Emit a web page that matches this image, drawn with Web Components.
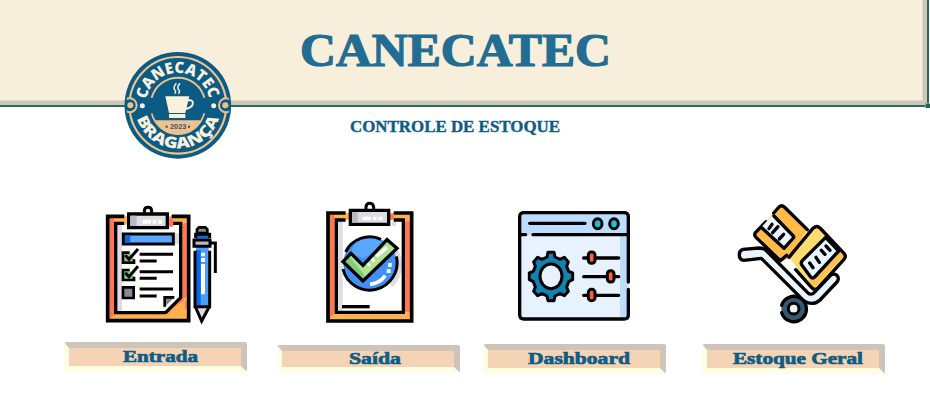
<!DOCTYPE html>
<html lang="pt-BR">
<head>
<meta charset="utf-8">
<title>Canecatec</title>
<style>body{margin:0;background:#fff;font-family:"Liberation Serif",serif;overflow:hidden}</style>
</head>
<body>
<stock-app></stock-app>
<script>
const define = (name, html) => customElements.define(name, class extends HTMLElement {
  constructor() {
    super();
    this.attachShadow({mode: 'open'}).innerHTML = html;
  }
});

// Text fitted to a given width, sitting on a given baseline
customElements.define('fit-text', class extends HTMLElement {
  connectedCallback() {
    const a = n => this.getAttribute(n);
    const w = +a('w'), h = +a('h');
    this.attachShadow({mode: 'open'}).innerHTML = `
      <style>:host{display:block;width:${w}px;height:${h}px}svg{display:block;overflow:visible}
      text{font:bold ${a('size')}px "Liberation Serif",serif;fill:currentColor;stroke:currentColor;stroke-width:${a('weight')}px}</style>
      <svg width="${w}" height="${h}"><text x="0" y="${a('base')}" textLength="${w}" lengthAdjust="spacingAndGlyphs">${a('label')}</text></svg>`;
  }
});

define('brand-logo', `
<style>:host{display:block;width:125px;height:120px}svg{display:block}
.t{font-family:"Open Sans","Liberation Sans",sans-serif;font-weight:800;fill:#f8f1de}</style>
<svg width="125" height="120" viewBox="0 0 375 360">
<defs><path id="up" d="M94.500 199A96 96 0 1 1 282.500 199"/><path id="dn" d="M59.500 181A129 129 0 0 0 317.500 181"/>
<clipPath id="disc"><circle cx="188.500" cy="181" r="156"/></clipPath></defs>
<circle cx="188.500" cy="181" r="160" fill="#0b5b85"/>
<circle cx="188.500" cy="181" r="145" fill="none" stroke="#eec28e" stroke-width="6.500"/>
<g clip-path="url(#disc)"><g fill="#0b5b85" stroke="#eec28e" stroke-width="6"><circle cx="44" cy="181" r="21"/><circle cx="333" cy="181" r="21"/></g>
<path d="M28 130H36V232H28ZM341 130H349V232H341Z" fill="#0b5b85"/></g>
<g fill="#eec28e"><circle cx="46" cy="181" r="9"/><circle cx="331" cy="181" r="9"/></g>
<g fill="#f8f1de"><circle cx="82" cy="182" r="7.500"/><circle cx="296" cy="182" r="7.500"/></g>
<path d="M110 158A82 82 0 0 1 268 158" fill="none" stroke="#eec28e" stroke-width="6"/>
<path d="M110 205Q113 218 120 228H258Q264 218 268 205" fill="none" stroke="#eec28e" stroke-width="5"/>
<path d="M117 228H261A83 83 0 0 1 117 228" fill="#eec28e"/>
<path d="M151 154H223L211 204H162ZM162 207H211V219H162Z" fill="#f8f1de"/>
<path d="M218 166H226Q236 168 233 178Q229 189 212 191" fill="none" stroke="#f8f1de" stroke-width="6"/>
<path d="M179 146Q185 138 178 133Q175 126 184 115M190 146Q197 138 190 133Q185 127 195 115" fill="none" stroke="#f8f1de" stroke-width="4.500"/>
<text x="165" y="253" textLength="49" lengthAdjust="spacingAndGlyphs" font-family="Liberation Sans,sans-serif" font-weight="bold" font-size="24" fill="#35586a">2023</text>
<circle cx="155" cy="245" r="3.500" fill="#35586a"/><circle cx="222" cy="245" r="3.500" fill="#35586a"/>
<text class="t" font-size="47"><textPath href="#up" startOffset="36" textLength="266" lengthAdjust="spacingAndGlyphs">CANECATEC</textPath></text>
<text class="t" font-size="46"><textPath href="#dn" startOffset="40" textLength="325" lengthAdjust="spacingAndGlyphs">BRAGANÇA</textPath></text>
</svg>`);

define('page-header', `
<style>:host{display:block;position:relative;box-sizing:border-box;width:929px;height:107px;background:#f7efdc;
border-right:2px solid #2c6a58;border-bottom:2px solid #2c6a58;box-shadow:inset -4px -4px #cbc7b9,inset -5px -5px #e1dac6}
.title{padding:26px 0 0 300px;color:#236d92}
brand-logo{position:absolute;left:115px;top:45px}
i{position:absolute;right:-3px;bottom:-3px;width:5px;height:5px;background:#216448;border-left:1px solid #88a897;border-top:1px solid #88a897;box-sizing:border-box}</style>
<div class="title"><slot></slot></div><i></i><brand-logo></brand-logo>`);

const icons = {
clip: `<svg width="130" height="130" viewBox="0 0 390 390">
<path d="M38 49H280V362H38Z" fill="#ffb04f"/><path d="M38 49H57V345L43 358H38ZM262 70H280V288L262 298Z" fill="#ff7757"/>
<path d="M62 70H257V293L212 338H62Z" fill="#fff"/><path d="M62 70H81V338H62ZM239 100H254V132H239Z" fill="#dcdce2"/>
<path d="M257 293L280 310V330L262 322L222 340H212Z" fill="#ff7757"/><path d="M250 312L270 300V345H210Z" fill="#ffb04f"/>
<path d="M88 49H38V362H281V49H230" fill="none" stroke="#000" stroke-width="11"/>
<path d="M88 70H62V338H212L257 293V70H230" fill="none" stroke="#000" stroke-width="10"/>
<path d="M207 323V291H239Z" fill="#8b8793"/><path d="M209 320V292H238" fill="none" stroke="#000" stroke-width="8"/>
<path d="M88 54H98V74H88Z" fill="#ffb04f"/><path d="M221 54H235V80H221Z" fill="#ff7757"/>
<path d="M148 43V33Q148 22 159 22T170 33V43" fill="#eee" stroke="#000" stroke-width="9"/>
<path d="M101 42H217V83H101Z" fill="#dcdce2" stroke="#000" stroke-width="10"/><path d="M106 47H125V78H106Z" fill="#bbb8c2"/>
<path d="M143 59H168V71H143ZM173 59H184V71H173ZM189 59H201V71H189Z" fill="#fff"/>
<path d="M85 102H235V132H85Z" fill="#59a7ff" stroke="#000" stroke-width="9"/><path d="M90 107H106V127H90Z" fill="#0869ef"/>
<g><path d="M104 158H84V188H117V178" fill="#82d17e" stroke="#000" stroke-width="8"/><path d="M91 166L102 178L129 147" fill="none" stroke="#000" stroke-width="9"/></g>
<g transform="translate(0 52)"><path d="M104 158H84V188H117V178" fill="#82d17e" stroke="#000" stroke-width="8"/><path d="M91 166L102 178L129 147" fill="none" stroke="#000" stroke-width="9"/></g>
<path d="M84 262H116V294H84Z" fill="#8b8793" stroke="#000" stroke-width="8"/>
<path d="M134 163H234M134 215H234M134 267H234M134 183H185M134 235H185M134 288H185" stroke="#000" stroke-width="9"/>
<path d="M303 110H341V323H303Z" fill="#4c9dff"/><path d="M303 102H344V114H303ZM303 150H317V323H303Z" fill="#0869ef"/>
<path d="M303 322H341L322 362Z" fill="#dcdce2"/><path d="M300 318L320 363L344 318" fill="none" stroke="#000" stroke-width="9"/>
<path d="M300 152V320H344V152M302 115V103H344V115" fill="none" stroke="#000" stroke-width="9"/>
<path d="M306 99V88L312 82H331L337 88V99Z" fill="#8b8793" stroke="#000" stroke-width="8"/>
<path d="M297 120H345V139H297Z" fill="#bbb8c2" stroke="#000" stroke-width="9"/><path d="M345 129H361V219" fill="none" stroke="#000" stroke-width="9"/>
<path d="M318 158H330V169H318ZM318 174H330V186H318ZM318 192H330V283H318Z" fill="#fff"/></svg>`,
check: `<svg width="110" height="135" viewBox="0 0 330 405">
<path d="M38 54H290V378H38Z" fill="#ffb04f"/><path d="M43 60H58V356L43 369ZM270 79H285V350H270Z" fill="#ff7757"/>
<path d="M64 75H264V352H64Z" fill="#fff"/><path d="M68 80H83V348H68ZM230 80H243V92H230Z" fill="#dcdce2"/>
<path d="M243 170A80 80 0 0 1 228 270" fill="none" stroke="#dcdce2" stroke-width="14"/>
<path d="M92 54H39V378H290V54H236" fill="none" stroke="#000" stroke-width="11"/><path d="M92 75H64V352H265V75H236" fill="none" stroke="#000" stroke-width="10"/>
<path d="M92 58H102V74H92Z" fill="#ffb04f"/><path d="M225 58H237V74H225Z" fill="#ff7757"/>
<path d="M153 46V36Q154 25 164 25T176 36V46" fill="#fff" stroke="#000" stroke-width="9"/>
<path d="M106 46H221V88H106Z" fill="#dcdce2" stroke="#000" stroke-width="10"/><path d="M111 51H128V83H111Z" fill="#bbb8c2"/>
<path d="M142 65H168V76H142ZM174 65H185V76H174ZM190 65H202V76H190Z" fill="#fff"/>
<circle cx="165" cy="206" r="80" fill="#3f91f7"/><path d="M125 137Q165 116 213 145L145 190L105 175Z" fill="#59a7ff"/>
<path d="M92 171A80 80 0 0 1 198 133M84 222A80 80 0 1 0 244 184" fill="none" stroke="#000" stroke-width="9"/>
<path d="M84 200L108 175L144 211L216 134L246 160L144 258Z" fill="#b0e493"/><path d="M84 200L102 184L148 239L144 258Z" fill="#7fcb7d"/>
<path d="M84 200L108 175L144 211L216 134L246 160L144 258Z" fill="none" stroke="#000" stroke-width="10"/>
<path d="M184 184L216 158" stroke="#fff" stroke-width="10"/><path d="M171 198L178 192M158 211L164 206" stroke="#fff" stroke-width="11"/>
<path d="M165 268Q193 266 211 242" fill="none" stroke="#fff" stroke-width="11"/><path d="M215 223H227V234H215ZM219 204H230V216H219Z" fill="#fff"/>
<path d="M81 335H164" stroke="#000" stroke-width="10"/></svg>`,
dash: `<svg width="130" height="130" viewBox="0 0 390 390">
<rect x="29" y="38" width="326" height="320" rx="13" fill="#e8f2ff"/><path d="M29 104V50Q29 38 42 38H343Q355 38 355 50V345Q355 357 342 357H330V104Z" fill="#bcddff"/>
<path d="M355 246V50Q355 38 342 38H42Q29 38 29 50V345Q29 357 42 357H342Q355 357 355 345V268" fill="none" stroke="#000" stroke-width="10" stroke-linecap="round"/>
<g stroke="#000" stroke-width="10" stroke-linecap="round"><path d="M59 70H225M30 104H47M69 104H353M221 174H326M221 230H326M221 286H326"/></g>
<g fill="#16c2d7" stroke="#000" stroke-width="9"><ellipse cx="263" cy="71" rx="13" ry="15"/><ellipse cx="312" cy="71" rx="13" ry="15"/></g>
<g fill="#ff6230" stroke="#000" stroke-width="9"><rect x="235" y="156" width="20" height="34" rx="9"/><rect x="292" y="212" width="20" height="34" rx="9"/><rect x="235" y="268" width="20" height="34" rx="9"/></g>
<path d="M114 157H132L135 171L150 178L163 172L175 186L170 199L176 214L188 219V239L176 245L170 261L175 274L163 287L150 281L135 288L132 302H114L111 288L96 281L83 287L71 274L76 261L70 245L58 239V219L70 214L76 199L71 186L83 172L96 178L111 171Z" fill="#1183b1" stroke="#000" stroke-width="9" stroke-linejoin="round"/>
<ellipse cx="123" cy="229" rx="33" ry="37" fill="#e8f2ff" stroke="#000" stroke-width="9"/></svg>`,
cart: `<svg width="125" height="135" viewBox="0 0 375 405"><g stroke="#000" stroke-width="10" stroke-linejoin="round" stroke-linecap="round">
<path d="M39 163L88 159Q101 159 110 168L233 293Q244 303 254 291L301 242Q310 233 321 241Q329 250 321 261L270 315Q254 330 232 323Q218 318 209 305L94 190L41 196Q28 194 28 181Q27 166 39 163Z" fill="#e8f5ff"/>
<path d="M128 55L147 35Q155 28 164 36L233 104L177 188L154 200L76 127Q71 120 79 111L98 92Z" fill="#ffbb48" stroke="none"/>
<path d="M131 54L147 36Q155 28 163 36L232 104M108 80L77 112Q71 120 78 127L151 197L170 181" fill="none"/>
<path d="M125 62L190 126L162 160L95 96Z" fill="#e8f5ff" stroke="none"/><path d="M132 63L190 123Q192 126 190 129L162 160L96 99" fill="none"/>
<path d="M126 88L117 101M144 95L128 113M161 118L148 132" fill="none"/>
<path d="M177 187L248 101Q259 89 270 99L342 175Q350 184 342 193L265 278Q254 288 245 278Z" fill="#ffdb70" stroke="none"/>
<path d="M318 163L342 181L254 279L236 258Z" fill="#ffc156" stroke="none"/><path d="M177 187L248 101Q259 89 270 99L342 175Q350 184 342 193L265 278Q254 288 245 278L197 224" fill="none"/>
<path d="M287 127L326 168L254 246Q248 252 242 246L216 211Q211 204 217 197Z" fill="#e8f5ff"/>
<path d="M239 204L249 218M258 187L268 202M274 166L285 178M288 153L300 166" fill="none"/>
</g><circle cx="192" cy="341" r="38" fill="#355873"/><path d="M155 331A38 38 0 1 1 155 353" fill="none" stroke="#000" stroke-width="10" stroke-linecap="round"/>
<circle cx="191" cy="341" r="16" fill="#e8f5ff" stroke="#000" stroke-width="9"/></svg>`};

customElements.define('menu-icon', class extends HTMLElement {
  connectedCallback() {
    this.attachShadow({mode: 'open'}).innerHTML = `<style>:host{display:block}svg{display:block}</style>${icons[this.getAttribute('name')]}`;
  }
});

define('menu-card', `
<style>:host{display:grid;grid-template-rows:var(--top) auto;width:183px;color:#0f5c85}
.icon{padding:var(--iy) 0 0 var(--ix)}
.button{box-sizing:border-box;height:var(--h,30px);border:6px solid;border-width:6px 6px 6px 5px;border-color:#cfc4b9 #cfc4b9 #fffde6 #fffde6;border-radius:3px;background:#f5d4b5;padding-left:var(--tx)}
</style><div class="icon"><slot name="icon"></slot></div><div class="button"><slot></slot></div>`);

define('stock-app', `
<style>:host{display:block;width:930px;height:400px}
.sub{padding:11px 0 0 350px;color:#0f5c85;height:69px}
nav{display:flex;align-items:flex-start;padding-left:64px}
menu-card+menu-card{margin-left:var(--gap)}</style>
<page-header><fit-text label="CANECATEC" w="311" h="55" size="46" base="39.5" weight="1.2"></fit-text></page-header>
<div class="sub"><fit-text label="CONTROLE DE ESTOQUE" w="210" h="20" size="16.500" base="14" weight=".4"></fit-text></div>
<nav>
<menu-card style="--top:155px;--ix:31px;--iy:13px;--tx:54px"><menu-icon slot="icon" name="clip"></menu-icon><fit-text label="Entrada" w="75" h="18" size="17.5" base="14" weight=".7"></fit-text></menu-card>
<menu-card style="--gap:30px;--top:158px;--ix:38px;--iy:8px;--tx:67px;--h:28px"><menu-icon slot="icon" name="check"></menu-icon><fit-text label="Saída" w="52" h="16" size="17.5" base="13" weight=".7"></fit-text></menu-card>
<menu-card style="--gap:23px;--top:157px;--ix:27px;--iy:13px;--tx:40px"><menu-icon slot="icon" name="dash"></menu-icon><fit-text label="Dashboard" w="102" h="18" size="17.5" base="14" weight=".7"></fit-text></menu-card>
<menu-card style="--gap:36px;--top:157px;--ix:28px;--iy:8px;--tx:26px"><menu-icon slot="icon" name="cart"></menu-icon><fit-text label="Estoque Geral" w="130" h="18" size="17.5" base="14" weight=".7"></fit-text></menu-card>
</nav>`);
</script>
</body>
</html>
